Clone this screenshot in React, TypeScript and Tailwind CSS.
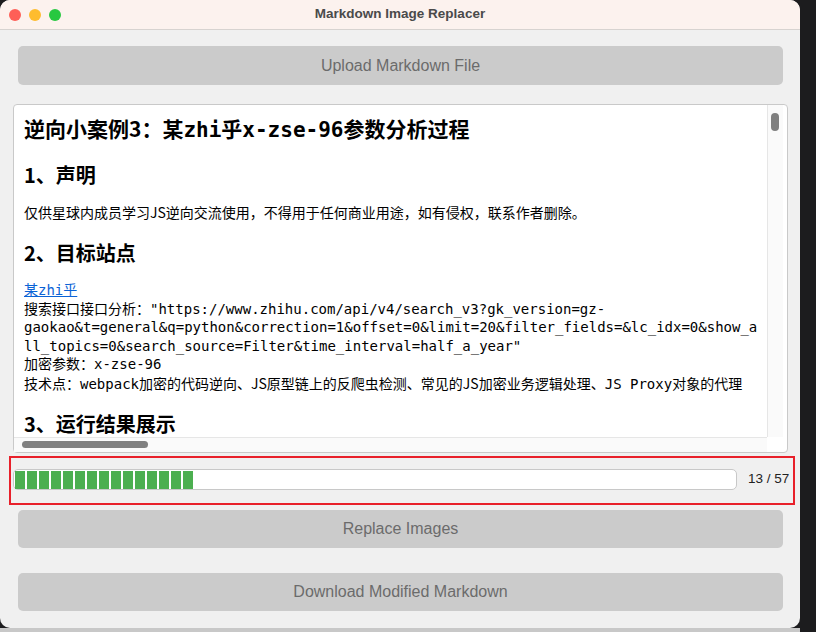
import React from "react";

const mono = { fontFamily: '"DejaVu Sans Mono", "Noto Sans CJK SC", monospace' } as const;

function S({ children, className = "" }: { children: React.ReactNode; className?: string }) {
  return (
    <span className={className} style={{ fontFamily: '"Noto Sans CJK SC", sans-serif' }}>
      {children}
    </span>
  );
}

function Btn({ label, className }: { label: string; className: string }) {
  return (
    <div
      className={`mx-[5px] flex items-center justify-center rounded-[5px] bg-[#cbcbcb] text-[16px] text-[#6b6b6b] ${className}`}
      style={{ fontFamily: '"Liberation Sans", Arial, sans-serif' }}
    >
      {label}
    </div>
  );
}

export default function App() {
  const chunks = Array.from({ length: 15 });
  return (
    <div className="flex h-[632px] w-[816px] flex-col overflow-hidden bg-[#1c1c1e]">
      <div className="flex h-[628px]">
        <div className="flex h-[628px] w-[800px] flex-col overflow-hidden rounded-[10px] bg-[#f0f0f0]">
          {/* title bar */}
          <div className="relative flex h-[30px] shrink-0 items-center justify-center border-b border-[#d7d3d0] bg-[#fcf2ee]">
            <div className="absolute left-[9px] top-[9px] flex gap-[8px]">
              <div className="h-[12px] w-[12px] rounded-full bg-[#fe5f57]" />
              <div className="h-[12px] w-[12px] rounded-full bg-[#febc2e]" />
              <div className="h-[12px] w-[12px] rounded-full bg-[#28c840]" />
            </div>
            <span
              className="text-[13.5px] font-bold text-[#4a4a4a]"
              style={{ fontFamily: '"Liberation Sans", Arial, sans-serif' }}
            >
              Markdown Image Replacer
            </span>
          </div>

          {/* body */}
          <div className="flex flex-col pl-[13px] pr-[12px] pt-[16px]">
            <Btn label="Upload Markdown File" className="h-[39px]" />

            {/* text area */}
            <div className="mt-[19px] flex h-[349px] flex-col rounded-[4px] border border-[#c9c9c9] bg-white">
              <div className="flex min-h-0 flex-1">
                <div className="min-w-0 flex-1 overflow-hidden pl-[10px] pt-[9px] text-black" style={mono}>
                  <div className="whitespace-nowrap text-[21px] font-bold leading-[28px]">
                    逆向小案例<S>3</S>：某zhi乎x-zse-96参数分析过程
                  </div>
                  <div className="mt-[17px] whitespace-nowrap text-[20px] font-bold leading-[28px]">
                    <S>1</S>、声明
                  </div>
                  <div className="mt-[13px] whitespace-nowrap text-[14px] leading-[19px]">
                    仅供星球内成员学习<S>JS</S>逆向交流使用，不得用于任何商业用途，如有侵权，联系作者删除。
                  </div>
                  <div className="mt-[16px] whitespace-nowrap text-[20px] font-bold leading-[28px]">
                    <S>2</S>、目标站点
                  </div>
                  <div className="mt-[13px] whitespace-nowrap text-[14px] leading-[18.5px]">
                    <div>
                      <span className="text-[#0b63d6] underline">某zhi乎</span>
                    </div>
                    <div>搜索接口接口分析："https://www.zhihu.com/api/v4/search_v3?gk_version=gz-</div>
                    <div>gaokao&amp;t=general&amp;q=python&amp;correction=1&amp;offset=0&amp;limit=20&amp;filter_fields=&amp;lc_idx=0&amp;show_a</div>
                    <div>ll_topics=0&amp;search_source=Filter&amp;time_interval=half_a_year"</div>
                    <div>加密参数：x-zse-96</div>
                    <div>
                      技术点：webpack加密的代码逆向、<S>JS</S>原型链上的反爬虫检测、常见的<S>JS</S>加密业务逻辑处理、JS Proxy对象的代理
                    </div>
                  </div>
                  <div className="mt-[20px] whitespace-nowrap text-[20px] font-bold leading-[24px]">
                    <S className="inline-block leading-[20px]">3</S>、运行结果展示
                  </div>
                </div>
                {/* vertical scrollbar */}
                <div className="mr-[4px] w-[16px] shrink-0 border-l border-[#e6e6e6] bg-[#fafafa] pl-[3px] pt-[8px]">
                  <div className="h-[18px] w-[8px] rounded-full bg-[#7f7f7f]" />
                </div>
              </div>
              {/* horizontal scrollbar */}
              <div className="mr-[20px] h-[15px] shrink-0 border-t border-[#e6e6e6] bg-[#fafafa] pl-[8px] pt-[3px]">
                <div className="h-[7px] w-[126px] rounded-full bg-[#808080]" />
              </div>
            </div>

            {/* progress */}
            <div className="relative mt-[16px] flex h-[21px] items-center">
              <div className="flex h-[21px] w-[724px] shrink-0 items-center gap-[2px] rounded-[5px] border border-[#c8c8c8] bg-white pl-[1px]">
                {chunks.map((_, i) => (
                  <div key={i} className="h-[18px] w-[10px] bg-[#4caf50]" />
                ))}
              </div>
              <span
                className="ml-[11px] shrink-0 whitespace-nowrap text-[13.5px] text-[#222]"
                style={{ fontFamily: '"Liberation Sans", Arial, sans-serif' }}
              >
                13 / 57
              </span>
              <div className="pointer-events-none absolute left-[-4px] top-[-13px] h-[49px] w-[786px] border-2 border-[#e8202a]" />
            </div>

            <Btn label="Replace Images" className="mt-[20px] h-[38px]" />
            <Btn label="Download Modified Markdown" className="mt-[25px] h-[38px]" />
          </div>
        </div>
        <div className="flex-1 bg-[#1c1c1e]" />
      </div>
      <div className="h-[4px] w-[800px] bg-[#c8c8c8]" />
    </div>
  );
}
